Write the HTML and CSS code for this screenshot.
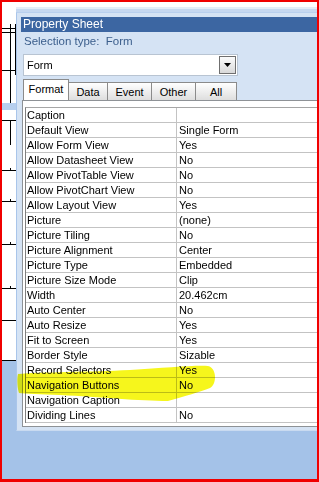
FILE: index.html
```html
<!DOCTYPE html>
<html>
<head>
<meta charset="utf-8">
<link rel="stylesheet" href="styles.css">
</head>
<body>
<div class="screen">
  <div class="designer">
    <svg width="14" height="477" viewBox="2 2 14 477" class="designer-svg">
      <rect x="2" y="2" width="14" height="358" fill="#ffffff"/>
      <rect x="2" y="103" width="14" height="7" fill="#b7cfee"/>
      <g stroke="#000" stroke-width="1" shape-rendering="crispEdges">
        <line x1="2" y1="28.5" x2="16" y2="28.5"/>
        <line x1="2" y1="32.5" x2="16" y2="32.5"/>
        <line x1="10.5" y1="24" x2="10.5" y2="103"/>
        <line x1="15.5" y1="24" x2="15.5" y2="75"/>
        <line x1="2" y1="70.5" x2="16" y2="70.5"/>
        <line x1="2" y1="120.5" x2="16" y2="120.5"/>
        <line x1="10.5" y1="120" x2="10.5" y2="145"/>
        <line x1="2" y1="360.5" x2="16" y2="360.5"/>
      </g>
      <g stroke="#000" stroke-width="1" shape-rendering="crispEdges">
        <line x1="2" y1="170.5" x2="16" y2="170.5"/>
        <line x1="10.5" y1="168" x2="10.5" y2="170"/>
        <line x1="2" y1="201.5" x2="16" y2="201.5"/>
        <line x1="10.5" y1="199" x2="10.5" y2="201"/>
        <line x1="2" y1="244.5" x2="16" y2="244.5"/>
        <line x1="10.5" y1="242" x2="10.5" y2="244"/>
        <line x1="2" y1="288.5" x2="16" y2="288.5"/>
        <line x1="10.5" y1="286" x2="10.5" y2="288"/>
        <line x1="2" y1="320.5" x2="16" y2="320.5"/>
      </g>
    </svg>
  </div>
  <div class="sheet-col">
    <div class="top-gap"></div>
    <div class="sheet">
      <div class="titlebar">Property Sheet</div>
      <div class="seltype">Selection type:&nbsp; Form</div>
      <div class="combo">
        <span class="combo-text">Form</span>
        <span class="drop">
          <svg width="7" height="4" viewBox="0 0 7 4"><path d="M0 0H7L3.5 4Z" fill="#000"/></svg>
        </span>
      </div>
      <div class="tabs">
        <div class="tab active">Format</div>
        <div class="tab w-data">Data</div>
        <div class="tab w-event">Event</div>
        <div class="tab w-other">Other</div>
        <div class="tab w-all">All</div>
      </div>
      <div class="page">
        <div class="grid">
          <div class="row"><span class="k">Caption</span><span class="v"></span></div>
          <div class="row"><span class="k">Default View</span><span class="v">Single Form</span></div>
          <div class="row"><span class="k">Allow Form View</span><span class="v">Yes</span></div>
          <div class="row"><span class="k">Allow Datasheet View</span><span class="v">No</span></div>
          <div class="row"><span class="k">Allow PivotTable View</span><span class="v">No</span></div>
          <div class="row"><span class="k">Allow PivotChart View</span><span class="v">No</span></div>
          <div class="row"><span class="k">Allow Layout View</span><span class="v">Yes</span></div>
          <div class="row"><span class="k">Picture</span><span class="v">(none)</span></div>
          <div class="row"><span class="k">Picture Tiling</span><span class="v">No</span></div>
          <div class="row"><span class="k">Picture Alignment</span><span class="v">Center</span></div>
          <div class="row"><span class="k">Picture Type</span><span class="v">Embedded</span></div>
          <div class="row"><span class="k">Picture Size Mode</span><span class="v">Clip</span></div>
          <div class="row"><span class="k">Width</span><span class="v">20.462cm</span></div>
          <div class="row"><span class="k">Auto Center</span><span class="v">No</span></div>
          <div class="row"><span class="k">Auto Resize</span><span class="v">Yes</span></div>
          <div class="row"><span class="k">Fit to Screen</span><span class="v">Yes</span></div>
          <div class="row"><span class="k">Border Style</span><span class="v">Sizable</span></div>
          <div class="row"><span class="k">Record Selectors</span><span class="v">Yes</span></div>
          <div class="row"><span class="k">Navigation Buttons</span><span class="v">No</span></div>
          <div class="row"><span class="k">Navigation Caption</span><span class="v"></span></div>
          <div class="row"><span class="k">Dividing Lines</span><span class="v">No</span></div>
        </div>
      </div>
    </div>
  </div>
  <svg class="marker" width="319" height="482" viewBox="0 0 319 482">
    <path d="M18 374 C40 372 90 372 130 370 C165 368 195 365 208 366 C217 368 217 384 210 388 C200 392 185 396 168 401 C140 401 100 397 60 395 C40 394 25 394 19 393 C17 387 17 378 18 374 Z" fill="#f6f61c"/>
  </svg>
</div>
</body>
</html>
```

FILE: styles.css
```css
html, body {
  margin: 0;
  padding: 0;
}
body {
  font-family: "Liberation Sans", Arial, sans-serif;
  font-size: 11px;
  color: #000;
}
.screen {
  position: relative;
  width: 319px;
  height: 482px;
  box-sizing: border-box;
  border-style: solid;
  border-color: #f00000;
  border-width: 2px 2px 3px 2px;
  background: #a4c2e8;
  display: flex;
  overflow: hidden;
}
.designer {
  flex: none;
  width: 14px;
}
.designer-svg {
  display: block;
}
.sheet-col {
  flex: none;
  width: 340px;
  display: flex;
  flex-direction: column;
}
.top-gap {
  height: 10px;
  background: linear-gradient(#ffffff 0 5px, #e4edf8 5px 7px, #c6d8f0 7px);
}
.sheet {
  background: #d5e3f4;
  border-top: 1px solid #b9d0ee;
  border-left: 1px solid #a9c5ea;
  padding: 4px 0 3px 4px;
  border-bottom: 1px solid #c9daf0;
}
.titlebar {
  height: 15px;
  line-height: 15px;
  background: #3c66a2;
  color: #ffffff;
  font-size: 12px;
  padding-left: 2px;
}
.seltype {
  height: 18px;
  line-height: 18px;
  font-size: 11.5px;
  color: #3b5e8c;
  padding-left: 3px;
}
.combo {
  margin-top: 4px;
  margin-left: 2px;
  width: 215px;
  height: 22px;
  box-sizing: border-box;
  border: 1px solid #b8c4d2;
  background: #ffffff;
  display: flex;
  align-items: center;
  justify-content: space-between;
  padding: 0 1px 0 3px;
}
.combo-text {
  font-size: 11px;
}
.drop {
  width: 17px;
  height: 18px;
  box-sizing: border-box;
  border: 1px solid #6f6f6f;
  background: linear-gradient(#fbfbfb, #d9d9d9);
  display: flex;
  align-items: center;
  justify-content: center;
}
.drop svg {
  display: block;
}
.tabs {
  margin-top: 4px;
  margin-left: 2px;
  height: 20px;
  display: flex;
  align-items: flex-end;
  position: relative;
  z-index: 1;
}
.tab {
  box-sizing: border-box;
  height: 18px;
  border: 1px solid #8b8b8b;
  border-bottom: none;
  border-left: none;
  background: linear-gradient(#ffffff, #dedede);
  display: flex;
  align-items: center;
  justify-content: center;
  padding-top: 1px;
}
.tab.active {
  width: 46px;
  height: 21px;
  border-left: 1px solid #8b8b8b;
  background: #ffffff;
  padding-top: 0;
  padding-bottom: 2px;
}
.w-data { width: 39px; }
.w-event { width: 44px; }
.w-other { width: 44px; }
.w-all { width: 41px; }
.page {
  margin-left: 1px;
  background: #ffffff;
  border: 1px solid #8e9296;
  padding: 6px 0 3px 2px;
}
.grid {
  border-left: 1px solid #7f7f7f;
  border-top: 1px solid #a6a6a6;
}
.row {
  display: flex;
  height: 15px;
  box-sizing: border-box;
  border-bottom: 1px solid #c3c3c3;
  line-height: 14px;
}
.k {
  width: 151px;
  flex: none;
  box-sizing: border-box;
  border-right: 1px solid #c3c3c3;
  padding-left: 1px;
  white-space: nowrap;
  overflow: hidden;
}
.v {
  padding-left: 2px;
  white-space: nowrap;
}
.marker {
  position: absolute;
  left: -2px;
  top: -2px;
  pointer-events: none;
  mix-blend-mode: multiply;
}
```
